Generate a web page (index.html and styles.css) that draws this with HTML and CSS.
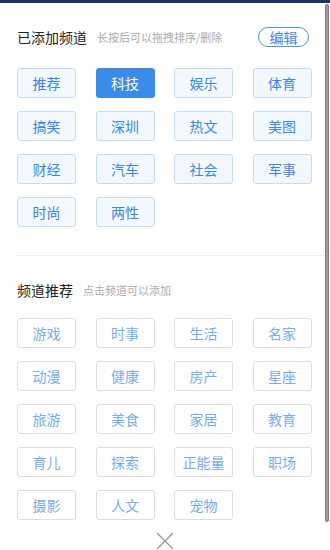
FILE: index.html
```html
<!DOCTYPE html>
<html lang="zh">
<head>
<meta charset="utf-8">
<link rel="stylesheet" href="styles.css">
</head>
<body>
<div class="topbar"></div>
<div class="page">
  <div class="head">
    <span class="title">已添加频道</span>
    <span class="hint">长按后可以拖拽排序/删除</span>
    <span class="edit">编辑</span>
  </div>
  <div class="grid mine">
    <span class="tag">推荐</span>
    <span class="tag active">科技</span>
    <span class="tag">娱乐</span>
    <span class="tag">体育</span>
    <span class="tag">搞笑</span>
    <span class="tag">深圳</span>
    <span class="tag">热文</span>
    <span class="tag">美图</span>
    <span class="tag">财经</span>
    <span class="tag">汽车</span>
    <span class="tag">社会</span>
    <span class="tag">军事</span>
    <span class="tag">时尚</span>
    <span class="tag">两性</span>
  </div>
  <div class="divider"></div>
  <div class="head head2">
    <span class="title">频道推荐</span>
    <span class="hint">点击频道可以添加</span>
  </div>
  <div class="grid rec">
    <span class="tag">游戏</span>
    <span class="tag">时事</span>
    <span class="tag">生活</span>
    <span class="tag">名家</span>
    <span class="tag">动漫</span>
    <span class="tag">健康</span>
    <span class="tag">房产</span>
    <span class="tag">星座</span>
    <span class="tag">旅游</span>
    <span class="tag">美食</span>
    <span class="tag">家居</span>
    <span class="tag">教育</span>
    <span class="tag">育儿</span>
    <span class="tag">探索</span>
    <span class="tag">正能量</span>
    <span class="tag">职场</span>
    <span class="tag">摄影</span>
    <span class="tag">人文</span>
    <span class="tag">宠物</span>
  </div>
  <div class="close">
    <svg width="18" height="18" viewBox="0 0 18 18"><path d="M1 1 L17 17 M17 1 L1 17" stroke="#9a9a9a" stroke-width="1.3" fill="none"/></svg>
  </div>
</div>
<div class="scrollbar"></div>
</body>
</html>
```
FILE: styles.css
```css
html, body {
  margin: 0;
  padding: 0;
  background: #fff;
  overflow: hidden;
  height: 550px;
}
body {
  font-family: "Noto Sans CJK SC", "Noto Sans", sans-serif;
  position: relative;
}
.topbar {
  height: 3px;
  background: #1b3461;
}
.page {
  padding-left: 17px;
}
.head {
  display: flex;
  align-items: center;
  height: 20px;
  margin-top: 24px;
  padding-right: 21px;
}
.title {
  font-size: 14px;
  color: #222;
  line-height: 20px;
}
.hint {
  font-size: 11px;
  color: #aaa;
  margin-left: 10px;
  line-height: 20px;
}
.edit {
  margin-left: auto;
  width: 49px;
  height: 18px;
  border: 1px solid #4a93e6;
  border-radius: 10px;
  color: #3d88e2;
  font-size: 14px;
  line-height: 18px;
  text-align: center;
}
.grid {
  display: grid;
  grid-template-columns: repeat(4, 59px);
  column-gap: 19.5px;
  row-gap: 13px;
  margin-top: 21px;
}
.tag {
  box-sizing: border-box;
  height: 30px;
  border-radius: 3px;
  font-size: 14px;
  line-height: 28px;
  text-align: center;
}
.mine .tag {
  background: #f3f8fe;
  border: 1px solid #c6dcf4;
  color: #3b87e0;
}
.mine .tag.active {
  background: #3b8be8;
  border-color: #3b8be8;
  color: #fff;
}
.divider {
  height: 1px;
  background: #efefef;
  margin-top: 28px;
  margin-left: -1px;
}
.head2 {
  margin-top: 24px;
}
.head2 .hint {
  margin-left: 10px;
}
.rec {
  margin-top: 18px;
}
.rec .tag {
  background: #fff;
  border: 1px solid #dedede;
  color: #78ade8;
}
.close {
  display: flex;
  justify-content: center;
  padding-right: 17px;
  margin-top: 12px;
}
.scrollbar {
  position: absolute;
  left: 325px;
  top: 4px;
  width: 2px;
  height: 516px;
  background: #9c9c9c;
  border: 1px solid #7c7c7c;
  border-radius: 2px;
}
```
